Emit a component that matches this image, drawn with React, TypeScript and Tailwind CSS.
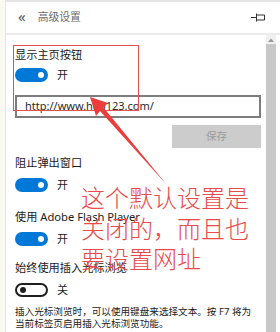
import React from 'react';

const font = "font-['Noto_Sans','Noto_Sans_CJK_SC',sans-serif]";

function Toggle({ on, label }: { on: boolean; label: string }) {
  return (
    <div className="flex items-center h-[14px]">
      {on ? (
        <div className="w-[33px] h-[14px] rounded-full bg-[#0078d7] flex items-center justify-end pr-[4px]">
          <div className="w-[6px] h-[6px] rounded-full bg-white" />
        </div>
      ) : (
        <div className="w-[33px] h-[14px] rounded-full border-2 border-[#1f1f1f] flex items-center pl-[3px]">
          <div className="w-[6px] h-[6px] rounded-full bg-[#1f1f1f]" />
        </div>
      )}
      <span className="ml-[9px] text-[11px] leading-[14px] text-[#1a1a1a]">{label}</span>
    </div>
  );
}

function Label({ children, className = '' }: { children: React.ReactNode; className?: string }) {
  return <div className={`text-[11.2px] leading-[16px] text-[#1a1a1a] whitespace-nowrap ${className}`}>{children}</div>;
}

export default function App() {
  return (
    <div className={`relative w-[280px] h-[332px] overflow-hidden bg-white flex ${font}`}>
      <div className="w-[6px] shrink-0 bg-[#fbf9f1] border-r border-[#e9e5d9]" />

      <div className="flex-1 flex flex-col border-t-2 border-[#e4e4e4] min-w-0">
        {/* header */}
        <div className="h-[33px] shrink-0 flex items-center pl-[12px] pr-[14px] border-b-2 border-[#ebebeb]">
          <span className="text-[15px] leading-none text-[#555] -mt-[2px]">«</span>
          <span className="ml-[12px] text-[10.8px] text-[#6d6d6d]">高级设置</span>
          <svg className="ml-auto" width="15" height="9" viewBox="0 0 15 9" fill="none" stroke="#333" strokeWidth="1">
            <path d="M0 4.5H5" />
            <path d="M5.5 0.5V8.5" />
            <path d="M6 2H13.5V7H6" />
          </svg>
        </div>

        {/* body */}
        <div className="flex-1 flex min-h-0">
          <div className="flex-1 flex flex-col pl-[9px] pr-[5px] pt-[12px] min-w-0">
            <Label>显示主页按钮</Label>
            <div className="mt-[5px]">
              <Toggle on label="开" />
            </div>
            <div className="mt-[13px] h-[23px] border-2 border-[#7d7d7d] flex items-center pl-[8px] text-[11px] text-[#2a2a2a]">
              http://www.hao123.com/
            </div>
            <div className="mt-[7px] self-end w-[89px] h-[23px] bg-[#cccccc] flex items-center justify-center text-[10.5px] text-[#9b9b9b]">
              保存
            </div>
            <Label className="mt-[7px]">阻止弹出窗口</Label>
            <div className="mt-[7px]">
              <Toggle on label="开" />
            </div>
            <Label className="mt-[17px]">使用 Adobe Flash Player</Label>
            <div className="mt-[7px]">
              <Toggle on label="开" />
            </div>
            <Label className="mt-[14px]">始终使用插入光标浏览</Label>
            <div className="mt-[7px]">
              <Toggle on={false} label="关" />
            </div>
            <div className="mt-[9px] text-[9.6px] leading-[12px] text-[#1a1a1a] whitespace-nowrap">
              插入光标浏览时，可以使用键盘来选择文本。按 F7 将为
              <br />
              当前标签页启用插入光标浏览功能。
            </div>
          </div>

          {/* scrollbar */}
          <div className="w-[10px] mr-[4px] shrink-0 flex flex-col">
            <div className="h-[9px] bg-[#f0f0f0] flex items-center justify-center">
              <svg width="6" height="4" viewBox="0 0 6 4" fill="#9a9a9a">
                <path d="M0 4L3 0.5L6 4Z" />
              </svg>
            </div>
            <div className="flex-1 bg-[#c8c8c8]" />
          </div>
        </div>
      </div>

      {/* annotation: red box */}
      <div className="absolute left-[13px] top-[45px] w-[126px] h-[66px] border border-[#e25050] pointer-events-none" />

      {/* annotation: arrow */}
      <svg className="absolute left-0 top-0 pointer-events-none" width="280" height="332" viewBox="0 0 280 332">
        <polygon points="90,97 108,103 103.5,107.5 167,185 100,111 96,116" fill="#ec3c3c" />
      </svg>

      {/* annotation: note */}
      <div className="absolute left-[81px] top-[182px] text-[24px] leading-[30.5px] font-light text-[#ea4a4a] whitespace-nowrap pointer-events-none font-['Noto_Sans_CJK_SC',sans-serif]">
        这个默认设置是
        <br />
        关闭的，而且也
        <br />
        要设置网址
      </div>
    </div>
  );
}
